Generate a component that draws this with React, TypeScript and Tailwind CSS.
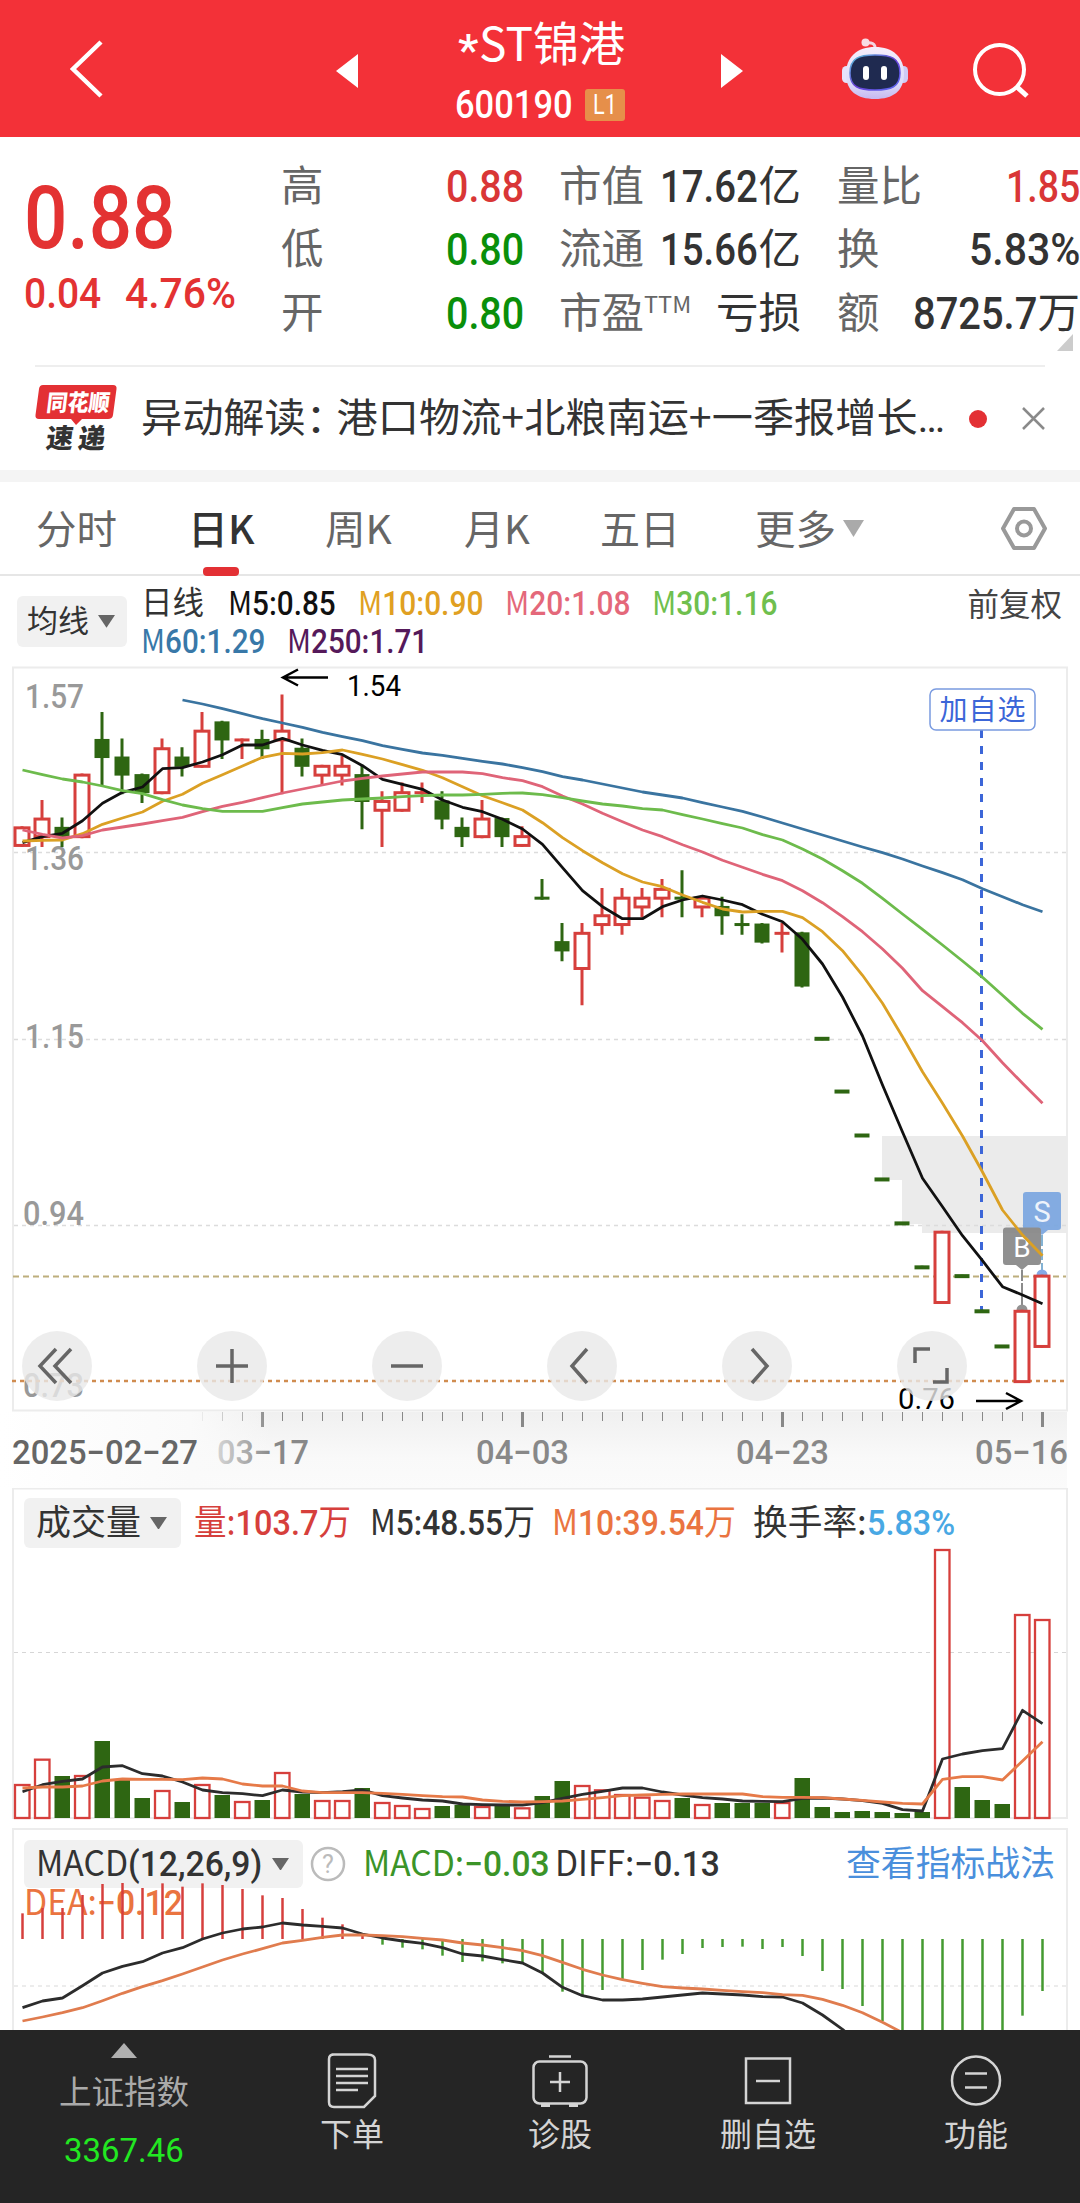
import React, { useLayoutEffect, useRef, useState } from 'react';

type Candle = [up: boolean, high: number, top: number, bottom: number, low: number];

const RED = '#d63f3c';
const GREEN = '#2e6612';

// [rising, high, body top, body bottom, low]
const candles: Candle[] = [
  [true, 1.39, 1.39, 1.37, 1.37], [true, 1.42, 1.4, 1.38, 1.37], [false, 1.4, 1.39, 1.38, 1.37],
  [true, 1.45, 1.45, 1.38, 1.38], [false, 1.52, 1.49, 1.47, 1.44], [false, 1.49, 1.47, 1.45, 1.43],
  [false, 1.45, 1.45, 1.43, 1.42], [true, 1.49, 1.48, 1.43, 1.43], [false, 1.48, 1.47, 1.46, 1.45],
  [true, 1.52, 1.5, 1.46, 1.46], [false, 1.51, 1.51, 1.49, 1.47], [true, 1.49, 1.49, 1.49, 1.47],
  [false, 1.5, 1.49, 1.48, 1.47], [true, 1.54, 1.5, 1.49, 1.43], [false, 1.49, 1.48, 1.46, 1.45],
  [true, 1.46, 1.46, 1.45, 1.44], [true, 1.47, 1.46, 1.45, 1.44], [false, 1.46, 1.45, 1.42, 1.39],
  [true, 1.43, 1.42, 1.41, 1.37], [true, 1.44, 1.43, 1.41, 1.41], [true, 1.44, 1.43, 1.43, 1.42],
  [false, 1.43, 1.42, 1.4, 1.39], [false, 1.4, 1.39, 1.38, 1.37], [true, 1.42, 1.4, 1.38, 1.38],
  [false, 1.4, 1.4, 1.38, 1.37], [true, 1.39, 1.38, 1.37, 1.37], [false, 1.33, 1.31, 1.31, 1.31],
  [false, 1.28, 1.26, 1.25, 1.24], [true, 1.28, 1.27, 1.23, 1.19], [true, 1.32, 1.29, 1.28, 1.27],
  [true, 1.32, 1.31, 1.28, 1.27], [true, 1.32, 1.31, 1.3, 1.29], [true, 1.33, 1.32, 1.31, 1.29],
  [false, 1.34, 1.31, 1.31, 1.29], [true, 1.31, 1.31, 1.3, 1.29], [false, 1.31, 1.3, 1.29, 1.27],
  [false, 1.29, 1.28, 1.28, 1.27], [false, 1.28, 1.28, 1.26, 1.26], [true, 1.28, 1.27, 1.27, 1.25],
  [false, 1.27, 1.27, 1.21, 1.21], [false, 1.15, 1.15, 1.15, 1.15], [false, 1.09, 1.09, 1.09, 1.09],
  [false, 1.04, 1.04, 1.04, 1.04], [false, 0.99, 0.99, 0.99, 0.99], [false, 0.94, 0.94, 0.94, 0.94],
  [false, 0.89, 0.89, 0.89, 0.89], [true, 0.93, 0.93, 0.85, 0.85], [false, 0.88, 0.88, 0.88, 0.88],
  [false, 0.84, 0.84, 0.84, 0.84], [false, 0.8, 0.8, 0.8, 0.8], [true, 0.84, 0.84, 0.76, 0.76],
  [true, 0.88, 0.88, 0.8, 0.8],
];

// Moving averages, in thirds of a pixel below y = 650
const ma5 = [578, 560, 550, 512, 460, 427, 411, 356, 353, 336, 314, 285, 285, 265, 285, 301, 314, 347, 388, 403, 418, 450, 472, 485, 508, 537, 583, 653, 722, 770, 806, 806, 770, 750, 738, 750, 764, 793, 815, 868, 942, 1041, 1158, 1305, 1446, 1585, 1670, 1757, 1832, 1910, 1935, 1961];
const ma10 = [573, 571, 570, 551, 523, 504, 486, 454, 433, 400, 374, 348, 322, 310, 312, 308, 300, 313, 327, 344, 361, 383, 410, 437, 458, 480, 518, 563, 602, 638, 671, 696, 710, 735, 757, 777, 786, 784, 784, 803, 845, 902, 976, 1060, 1160, 1265, 1360, 1458, 1566, 1680, 1755, 1817];
const ma20 = [540, 553, 564, 557, 540, 531, 522, 512, 502, 485, 469, 457, 443, 429, 417, 405, 393, 385, 378, 372, 366, 366, 366, 371, 383, 392, 410, 438, 462, 490, 515, 540, 560, 584, 606, 631, 652, 673, 692, 722, 758, 800, 845, 897, 955, 1022, 1070, 1118, 1172, 1238, 1300, 1360];
const ma30 = [360, 374, 387, 396, 408, 422, 431, 449, 465, 476, 484, 484, 484, 473, 462, 456, 450, 447, 444, 440, 437, 435, 435, 433, 430, 429, 434, 443, 453, 462, 468, 476, 480, 494, 507, 521, 534, 554, 570, 597, 627, 662, 700, 745, 792, 838, 885, 933, 982, 1036, 1090, 1138];
const ma60 = [150, 162, 176, 191, 206, 219, 232, 247, 260, 272, 287, 298, 309, 316, 325, 334, 342, 353, 365, 380, 390, 402, 414, 426, 435, 444, 458, 471, 484, 501, 519, 537, 555, 573, 591, 608, 627, 648, 668, 689, 716, 740, 764, 785];

const volTop = [912, 836, 888, 885, 783, 900, 954, 930, 966, 912, 945, 963, 960, 876, 942, 960, 960, 924, 966, 975, 984, 978, 975, 978, 978, 982, 948, 903, 915, 928, 942, 950, 960, 954, 972, 969, 969, 969, 966, 894, 981, 996, 993, 996, 999, 996, 207, 921, 960, 972, 402, 417];
const vol5 = [935, 914, 904, 897, 861, 857, 881, 888, 906, 930, 938, 941, 947, 930, 936, 938, 935, 930, 947, 954, 960, 963, 972, 974, 975, 975, 968, 955, 943, 934, 924, 924, 936, 945, 953, 957, 963, 964, 965, 955, 954, 957, 962, 970, 989, 993, 837, 822, 812, 806, 691, 731];
const vol10 = [924, 921, 921, 918, 903, 897, 898, 898, 899, 894, 897, 912, 918, 918, 933, 938, 938, 938, 940, 943, 947, 950, 951, 960, 964, 966, 965, 963, 958, 953, 947, 945, 943, 942, 942, 942, 942, 950, 952, 952, 953, 957, 961, 966, 970, 972, 898, 890, 890, 900, 843, 785];

const macd = [280, 264, 264, 225, 192, 189, 204, 190, 200, 190, 195, 207, 226, 234, 267, 293, 313, 343, 374, 383, 388, 407, 426, 424, 430, 428, 462, 515, 527, 510, 480, 450, 419, 402, 384, 381, 380, 387, 381, 408, 453, 507, 558, 603, 700, 700, 700, 700, 700, 700, 587, 513];
const diff = [563, 543, 534, 497, 459, 439, 425, 399, 383, 357, 339, 327, 321, 309, 315, 319, 324, 342, 354, 363, 370, 383, 402, 408, 419, 429, 459, 502, 527, 540, 540, 537, 531, 525, 519, 522, 525, 530, 531, 549, 585, 628, 680];
const dea = [603, 591, 578, 563, 542, 520, 500, 482, 462, 441, 420, 402, 386, 369, 361, 352, 345, 345, 347, 350, 355, 360, 369, 375, 383, 392, 407, 427, 448, 465, 479, 490, 500, 504, 507, 511, 515, 518, 524, 526, 538, 556, 578, 607, 638];

const xAt = (i: number) => 22 + i * 20;
const priceY = (p: number) => 696 + (1.54 - p) * 879;
const points = (ys: number[], base: number, start = 0) =>
  ys.map((y, i) => `${xAt(i + start) + 0.5},${(base + y / 3).toFixed(1)}`).join(' ');

// Squeezes its text to the width of the box, for the condensed numerals
const Fit: React.FC<{ className?: string; children: React.ReactNode }> = ({ className = '', children }) => {
  const boxRef = useRef<HTMLSpanElement>(null);
  const textRef = useRef<HTMLSpanElement>(null);
  const [scale, setScale] = useState(1);

  useLayoutEffect(() => {
    if (boxRef.current && textRef.current) {
      setScale(boxRef.current.clientWidth / textRef.current.offsetWidth);
    }
  }, []);

  return (
    <span ref={boxRef} className={`block shrink-0 whitespace-nowrap ${className}`}>
      <span ref={textRef} className="inline-block origin-left" style={{ transform: `scaleX(${scale})` }}>
        {children}
      </span>
    </span>
  );
};

// Latin letters that take the shape of the Chinese face
const Cn: React.FC<{ children: React.ReactNode }> = ({ children }) => (
  <span className="[font-family:'Noto_Sans_CJK_SC',sans-serif] font-normal leading-[0]">{children}</span>
);

const Caret: React.FC<{ className?: string }> = ({ className = '' }) => (
  <svg viewBox="0 0 16 12" className={className}>
    <path d="M0 0H16L8 12Z" fill="#666" />
  </svg>
);

const Header = () => (
  <header className="flex h-[137px] shrink-0 items-center bg-[#f33138] text-white">
    <svg width="33" height="58" viewBox="0 0 33 58" className="ml-[70px]" fill="none" stroke="#fff" strokeWidth="4.5">
      <path d="M31 2L3 29L31 56" />
    </svg>
    <svg width="22" height="34" viewBox="0 0 22 34" className="ml-[233px] mt-1">
      <path d="M22 0V34L0 17Z" fill="#fff" />
    </svg>
    <div className="ml-[97px] mt-0.5 flex w-[170px] flex-col gap-[10px]">
      <div className="flex h-[60px] items-center pl-[3px]">
        <Fit className="mt-3 w-[21px] text-[44px] font-medium leading-[60px]">*</Fit>
        <Fit className="w-[146px] text-[47px] leading-[60px]"><Cn>ST锦港</Cn></Fit>
      </div>
      <div className="flex h-10 items-center">
        <Fit className="w-[118px] text-[38px] font-medium leading-10">600190</Fit>
        <span className="ml-3 flex h-8 w-10 items-center justify-center rounded-[3px] bg-[#e68f4a]">
          <Fit className="w-[24px] text-[27px] leading-8">L1</Fit>
        </span>
      </div>
    </div>
    <svg width="22" height="34" viewBox="0 0 22 34" className="ml-24 mt-1">
      <path d="M0 0V34L22 17Z" fill="#fff" />
    </svg>
    <svg width="68" height="62" viewBox="0 0 68 62" className="ml-[98px]">
      <defs>
        <linearGradient id="shell" x1="0" y1="0" x2="0" y2="1">
          <stop offset="0" stopColor="#f6edfb" />
          <stop offset="0.7" stopColor="#dcdcfa" />
          <stop offset="1" stopColor="#c6b8f0" />
        </linearGradient>
        <linearGradient id="rim" x1="0" y1="0" x2="1" y2="1">
          <stop offset="0" stopColor="#59c8d8" />
          <stop offset="0.5" stopColor="#6a3fd8" />
          <stop offset="1" stopColor="#5a6cf0" />
        </linearGradient>
      </defs>
      <path d="M34 12C35 5 30 4 24 5" fill="none" stroke="#f3d5e2" strokeWidth="3" />
      <circle cx="24.500" cy="4.500" r="4" fill="#f8dbe3" />
      <rect x="1" y="28" width="9" height="17" rx="4.500" fill="#e6e2fb" />
      <rect x="58" y="28" width="9" height="17" rx="4.500" fill="#cfcbf6" />
      <path d="M34 9C52 9 63 19 63 36C63 53 52 61 34 61C16 61 5 53 5 36C5 19 16 9 34 9Z" fill="url(#shell)" />
      <path d="M34 17C50 17 59 20 59 35C59 49 50 52 34 52C18 52 9 49 9 35C9 20 18 17 34 17Z" fill="#1f2a50" stroke="url(#rim)" strokeWidth="1.500" />
      <rect x="22" y="28" width="6" height="14" rx="3" fill="#fff" />
      <rect x="40" y="28" width="6" height="14" rx="3" fill="#fff" />
    </svg>
    <svg width="56" height="56" viewBox="0 0 56 56" className="ml-16 mt-1" fill="none" stroke="#fff" strokeWidth="4">
      <circle cx="26.500" cy="26.500" r="24.500" />
      <path d="M43 43L54 53" strokeWidth="5" />
    </svg>
  </header>
);

const QuoteRow: React.FC<{ label: React.ReactNode; children: React.ReactNode }> = ({ label, children }) => (
  <div className="flex h-[63.5px] items-center justify-between text-[42.5px] leading-[60px]">
    <span className="flex text-[#666]">{label}</span>
    {children}
  </div>
);

const Quote = () => (
  <section className="relative flex h-[228px] shrink-0 pt-[18px] text-[45px] text-[#333]">
    <div className="w-[281px] shrink-0 pt-[13px] text-[#e33232]">
      <Fit className="ml-6 w-[152px] text-[88px] font-medium leading-[100px]">0.88</Fit>
      <div className="flex gap-6 pl-[24px]">
        <Fit className="w-[77px] text-[43px] font-medium leading-[50px]">0.04</Fit>
        <Fit className="w-[111px] text-[43px] font-medium leading-[50px]">4.76%</Fit>
      </div>
    </div>
    <div className="w-[243px] shrink-0">
      <QuoteRow label="高"><Fit className="w-[78px] text-[45px] font-medium text-[#d93636]">0.88</Fit></QuoteRow>
      <QuoteRow label="低"><Fit className="w-[78px] text-[45px] font-medium text-[#0a8f0a]">0.80</Fit></QuoteRow>
      <QuoteRow label="开"><Fit className="w-[78px] text-[45px] font-medium text-[#0a8f0a]">0.80</Fit></QuoteRow>
    </div>
    <div className="ml-[35px] w-[242px] shrink-0">
      <QuoteRow label="市值">
        <span className="flex"><Fit className="w-[98px] text-[45px] font-medium">17.62</Fit>亿</span>
      </QuoteRow>
      <QuoteRow label="流通">
        <span className="flex"><Fit className="w-[98px] text-[45px] font-medium">15.66</Fit>亿</span>
      </QuoteRow>
      <QuoteRow label={<>市盈<Fit className="mt-[-8px] w-[47px] text-[23px]"><Cn>TTM</Cn></Fit></>}>
        <span>亏损</span>
      </QuoteRow>
    </div>
    <div className="ml-[36px] w-[243px] shrink-0">
      <QuoteRow label="量比"><Fit className="w-[74px] text-[45px] font-medium text-[#d93636]">1.85</Fit></QuoteRow>
      <QuoteRow label="换"><Fit className="w-[111px] text-[45px] font-medium">5.83%</Fit></QuoteRow>
      <QuoteRow label="额">
        <span className="flex"><Fit className="w-[124px] text-[45px] font-medium">8725.7</Fit>万</span>
      </QuoteRow>
    </div>
    <svg width="16" height="17" viewBox="0 0 16 17" className="absolute bottom-[14px] right-[7px]">
      <path d="M16 0V17H0Z" fill="#ccc" />
    </svg>
  </section>
);

const News = () => (
  <section className="mx-[35px] flex h-[105px] shrink-0 items-center border-t-2 border-[#eee]">
    <svg width="84" height="70" viewBox="0 0 84 70" className="shrink-0">
      <path d="M8 1H78Q82 1 81.500 5L78 31Q77.500 35 73 35H47L41 41L36 35H4Q0 35 0.500 31L4 5Q4.500 1 8 1Z" fill="#e33034" />
      <g transform="skewX(-7)" fontFamily="'Noto Sans CJK SC', sans-serif" fontWeight="900">
        <text x="14" y="27" fontSize="23" fill="#fff" textLength="63" lengthAdjust="spacingAndGlyphs">同花顺</text>
        <text x="18" y="64" fontSize="27" fill="#333" textLength="27" lengthAdjust="spacingAndGlyphs">速</text>
        <text x="50" y="64" fontSize="27" fill="#333" textLength="27" lengthAdjust="spacingAndGlyphs">递</text>
      </g>
    </svg>
    <Fit className="ml-[22px] w-[804px] text-[40px] leading-[60px] text-[#333]">
      <Cn>异动解读<span className="tracking-[-10px]">：</span>港口物流+北粮南运+一季报增长</Cn>…
    </Fit>
    <span className="ml-[24px] size-[18px] rounded-full bg-[#e33034]" />
    <svg width="23" height="23" viewBox="0 0 23 23" className="ml-auto" stroke="#8a8a8a" strokeWidth="2.500">
      <path d="M1 1L22 22M22 1L1 22" />
    </svg>
  </section>
);

const Tabs = () => (
  <nav className="flex h-[94px] shrink-0 items-center border-b-2 border-[#e6e6e6] pl-9 pt-[5px] text-[40px] leading-[60px] text-[#666]">
    <Fit className="w-[81px]">分时</Fit>
    <span className="relative ml-[71px]">
      <Fit className="w-[67px] font-medium text-[#333]"><Cn><b className="font-medium">日K</b></Cn></Fit>
      <span className="absolute bottom-[-15px] left-[15px] h-[9px] w-9 rounded-[4px] bg-[#e33034]" />
    </span>
    <Fit className="ml-[70px] w-[67px]"><Cn>周K</Cn></Fit>
    <Fit className="ml-[72px] w-[66px]"><Cn>月K</Cn></Fit>
    <Fit className="ml-[70px] w-[80px]">五日</Fit>
    <Fit className="ml-[75px] w-[81px]">更多</Fit>
    <svg width="21" height="17" viewBox="0 0 21 17" className="ml-[7px] mt-[-4px]">
      <path d="M0 0H21L10.500 17Z" fill="#aaa" />
    </svg>
    <svg width="46" height="43" viewBox="0 0 46 43" className="ml-[137px] mt-[-5px]" fill="none" stroke="#999" strokeWidth="4" strokeLinejoin="round">
      <path d="M13 2H33L44 21.500L33 41H13L2 21.500Z" />
      <circle cx="23" cy="21.500" r="7" />
    </svg>
  </nav>
);

const Averages = () => (
  <section className="flex h-[84px] shrink-0 pl-[17px] text-[33px] leading-[38px]">
    <div className="mt-[20px] flex h-[51px] w-[110px] items-center rounded-[6px] bg-[#f1f1f1] pl-[10px]">
      <span className="text-[31px] text-[#333]">均线</span>
      <Caret className="ml-[9px] w-[17px]" />
    </div>
    <div className="ml-[14px] mt-[9px]">
      <div className="flex">
        <span className="text-[31.5px] text-[#333]">日线</span>
        <Fit className="ml-[24px] w-[108px] font-medium text-[#111]"><Cn>M</Cn>5:0.85</Fit>
        <Fit className="ml-[22px] w-[125px] font-medium text-[#e0a022]"><Cn>M</Cn>10:0.90</Fit>
        <Fit className="ml-[22px] w-[125px] font-medium text-[#e4687a]"><Cn>M</Cn>20:1.08</Fit>
        <Fit className="ml-[22px] w-[125px] font-medium text-[#6fbf4e]"><Cn>M</Cn>30:1.16</Fit>
      </div>
      <div className="flex">
        <Fit className="w-[124px] font-medium text-[#3878a8]"><Cn>M</Cn>60:1.29</Fit>
        <Fit className="ml-[22px] w-[141px] font-medium text-[#55195a]"><Cn>M</Cn>250:1.71</Fit>
      </div>
    </div>
    <span className="ml-auto mr-[18px] mt-[11px] text-[31.5px] text-[#444]">前复权</span>
  </section>
);

const tools = ['M-1-17L-17 0L-1 17M14-17L-2 0L14 17', 'M-16 0H16M0-17V17', 'M-16 0H16', 'M5-17L-10 0L5 17', 'M-5-17L10 0L-5 17', 'M-17-3V-17H-2M15 2V16H1'];

const AxisText: React.FC<{ x: number; y: number; w: number; fill?: string; children: string }> = ({ x, y, w, fill = '#999', children }) => (
  <text x={x} y={y} textLength={w} lengthAdjust="spacingAndGlyphs" fontSize="33" fontWeight="500" fill={fill}>
    {children}
  </text>
);

const PriceChart = () => (
  <section className="relative h-[828px] shrink-0">
    <svg width="1080" height="828" viewBox="0 660 1080 828" fill="none">
      <defs>
        <linearGradient id="axisBg" x1="0" y1="0" x2="0" y2="1">
          <stop offset="0" stopColor="#f0f0f0" />
          <stop offset="0.6" stopColor="#f9f9f9" />
          <stop offset="1" stopColor="#fbfbfb" />
        </linearGradient>
        <linearGradient id="axisFade" x1="0" y1="0" x2="1" y2="0">
          <stop offset="0" stopColor="#fff" />
          <stop offset="0.7" stopColor="#fafafa" />
          <stop offset="1" stopColor="#fafafa" stopOpacity="0" />
        </linearGradient>
      </defs>
      <path d="M13 667.500H1067V1410.500H13Z" stroke="#ececec" strokeWidth="2" />
      <path d="M882 1136H1067V1233H922V1224H902V1180H882Z" fill="#ebebeb" />
      <path d="M14 852.500H1066M14 1039.500H1066M14 1225.500H1066" stroke="#dcdcdc" strokeWidth="1.500" strokeDasharray="4 4" />
      <AxisText x={25} y={708} w={59}>1.57</AxisText>
      <AxisText x={25} y={870} w={59}>1.36</AxisText>
      <AxisText x={25} y={1048} w={59}>1.15</AxisText>
      <AxisText x={23} y={1225} w={61}>0.94</AxisText>
      <AxisText x={23} y={1397} w={61}>0.73</AxisText>
      <path d="M13 1276.500H1066" stroke="#bdae7c" strokeWidth="2" strokeDasharray="6 4" />
      <path d="M12 1381H1066" stroke="#d08c50" strokeWidth="2.500" strokeDasharray="4 4" />

      <path d="M981.500 730V1312" stroke="#3c66d8" strokeWidth="3" strokeDasharray="8 8" />
      <rect x="930" y="689" width="105" height="41" rx="6" fill="#fff" stroke="#7a9be0" strokeWidth="1.500" />
      <text x="939.500" y="720" fontSize="28" fill="#3c66d8" textLength="86">加自选</text>

      <g opacity="0.9">
        <path d="M1026 1192H1058Q1061 1192 1061 1195V1227Q1061 1230 1058 1230H1048L1042 1235L1036 1230H1026Q1023 1230 1023 1227V1195Q1023 1192 1026 1192Z" fill="#78a5e0" />
        <path d="M1042 1235V1272" stroke="#4a8fc0" strokeWidth="1.500" strokeDasharray="11 3" />
        <circle cx="1042" cy="1275" r="5.500" fill="#78a0e4" />
        <text x="1042" y="1222" textAnchor="middle" fontSize="29" fill="#eef4fd">S</text>
        <path d="M1006 1227.500H1038Q1041 1227.500 1041 1230.500V1262Q1041 1265 1038 1265H1028L1022 1270L1016 1265H1006Q1003 1265 1003 1262V1230.500Q1003 1227.500 1006 1227.500Z" fill="#858585" />
        <path d="M1022 1270V1306" stroke="#555" strokeWidth="1.500" strokeDasharray="11 2" />
        <circle cx="1022" cy="1310" r="5.500" fill="#888" />
        <text x="1022" y="1257" textAnchor="middle" fontSize="28" fill="#fff">B</text>
      </g>

      {candles.map(([up, high, top, bottom, low], i) => {
        const x = xAt(i);
        const yTop = priceY(top);
        const yBottom = priceY(bottom);
        const color = up ? RED : GREEN;
        return (
          <g key={i} stroke={color} strokeWidth="3">
            <path d={`M${x} ${priceY(high) - 1.5}V${yTop}M${x} ${yBottom}V${priceY(low) + 1.5}`} />
            {top === bottom ? (
              <path d={`M${x - 7.5} ${yTop}H${x + 7.5}`} strokeWidth={high === low ? 4 : 3} />
            ) : up ? (
              <rect x={x - 7} y={yTop} width="14" height={yBottom - yTop} fill="#fff" />
            ) : (
              <rect x={x - 7.5} y={yTop - 1} width="15" height={yBottom - yTop + 1.5} fill={GREEN} stroke="none" />
            )}
          </g>
        );
      })}

      <g strokeWidth="2.800" strokeLinejoin="round">
        <polyline points={points(ma60, 650, 8)} stroke="#3a74a0" />
        <polyline points={points(ma5, 650)} stroke="#111" />
        <polyline points={points(ma10, 650)} stroke="#dba024" />
        <polyline points={points(ma20, 650)} stroke="#df6478" />
        <polyline points={points(ma30, 650)} stroke="#6dbb4c" />
      </g>

      <path d="M328 677.500H283M298 669.500L283 677.500L298 685.500" stroke="#000" strokeWidth="2.500" />
      <text x="347" y="696" fontSize="29" fill="#000" textLength="54" lengthAdjust="spacingAndGlyphs">1.54</text>
      <path d="M976 1401H1021M1006 1393L1021 1401L1006 1409" stroke="#000" strokeWidth="2.500" />
      <text x="898" y="1409" fontSize="29" fill="#000" textLength="57" lengthAdjust="spacingAndGlyphs">0.76</text>

      <rect x="12" y="1412" width="1055" height="76" fill="url(#axisBg)" />
      {candles.map((_, i) => (
        <path key={i} d={i % 13 === 12 ? `M${xAt(i) + 0.5} 1412V1427` : `M${xAt(i) + 0.5} 1412V1421`} stroke="#888" strokeWidth={i % 13 === 12 ? 3 : 1} />
      ))}
      <AxisText x={217} y={1464} w={92} fill="#888">03−17</AxisText>
      <AxisText x={476} y={1464} w={93} fill="#888">04−03</AxisText>
      <AxisText x={736} y={1464} w={93} fill="#888">04−23</AxisText>
      <AxisText x={975} y={1464} w={93} fill="#888">05−16</AxisText>
      <rect x="0" y="1412" width="272" height="76" fill="url(#axisFade)" />
      <AxisText x={12} y={1464} w={186} fill="#666">2025−02−27</AxisText>
    </svg>
    <div className="absolute left-[22px] top-[671px] flex gap-[105px]">
      {tools.map((d) => (
        <svg key={d} width="70" height="70" viewBox="-35 -35 70 70" className="rounded-full bg-[#e9e9e9]/80" fill="none" stroke="#666" strokeWidth="3.500">
          <path d={d} />
        </svg>
      ))}
    </div>
  </section>
);

const Volume = () => (
  <section className="relative h-[340px] shrink-0">
    <svg width="1080" height="340" viewBox="0 1488 1080 340" className="absolute inset-0" fill="none">
      <path d="M13 1818V1488.500H1067V1818Z" stroke="#ececec" strokeWidth="2" />
      <path d="M14 1652.500H1066" stroke="#d6d6d6" strokeWidth="1.200" strokeDasharray="4 4" />
      {volTop.map((top, i) => {
        const y = 1480 + top / 3;
        return candles[i][0] ? (
          <rect key={i} x={xAt(i) - 7} y={y + 1} width="14.500" height={1817 - y} fill="#fff" stroke={RED} strokeWidth="2.300" />
        ) : (
          <rect key={i} x={xAt(i) - 7.5} y={y} width="15.500" height={1818 - y} fill={GREEN} />
        );
      })}
      <g strokeWidth="2.800" strokeLinejoin="round">
        <polyline points={points(vol5, 1480)} stroke="#2c2c2c" />
        <polyline points={points(vol10, 1480)} stroke="#e67a48" />
      </g>
    </svg>
    <div className="relative flex items-center pl-6 pt-[10px] text-[35px] leading-[47px] text-[#333]">
      <div className="flex h-[50px] w-[157px] items-center rounded-[6px] bg-[#f1f1f1] pl-[12px]">
        <span>成交量</span>
        <Caret className="ml-[9px] w-[17px]" />
      </div>
      <Fit className="ml-[13px] w-[157px] font-medium text-[#d63f3c]"><Cn>量:</Cn>103.7<Cn>万</Cn></Fit>
      <Fit className="ml-[19px] w-[165px] font-medium"><Cn>M</Cn>5:48.55<Cn>万</Cn></Fit>
      <Fit className="ml-[17px] w-[184px] font-medium text-[#ea7440]"><Cn>M</Cn>10:39.54<Cn>万</Cn></Fit>
      <Fit className="ml-[17px] w-[114px]"><Cn>换手率:</Cn></Fit>
      <Fit className="w-[88px] font-medium text-[#48a8e4]">5.83%</Fit>
    </div>
  </section>
);

const Macd = () => (
  <section className="relative h-[202px] shrink-0 overflow-hidden">
    <svg width="1080" height="202" viewBox="0 1828 1080 202" className="absolute inset-0" fill="none">
      <path d="M13 2040V1829H1067V2040" stroke="#ececec" strokeWidth="2" />
      <path d="M14 1986H1066" stroke="#e6e6e6" strokeWidth="1.500" strokeDasharray="4 4" />
    </svg>
    <div className="relative flex items-center pl-6 pt-[12px] text-[35px] leading-[47px] text-[#333]">
      <div className="flex h-[48px] w-[279px] items-center rounded-[6px] bg-[#f1f1f1] pl-[12px]">
        <Fit className="w-[226px] font-medium"><Cn>MACD</Cn>(12,26,9)</Fit>
        <Caret className="ml-[10px] w-[17px]" />
      </div>
      <svg width="36" height="36" viewBox="0 0 36 36" className="ml-[7px]">
        <circle cx="18" cy="18" r="16" fill="none" stroke="#bbb" strokeWidth="2.500" />
        <text x="18" y="27" textAnchor="middle" fontSize="25" fill="#bbb">?</text>
      </svg>
      <Fit className="ml-[17px] w-[187px] font-medium text-[#3b9428]"><Cn>MACD:</Cn>−0.03</Fit>
      <Fit className="ml-[5px] w-[165px] font-medium"><Cn>DIFF:</Cn>−0.13</Fit>
      <Fit className="ml-auto mr-[25px] w-[209px] text-[#4a8fdc]">查看指标战法</Fit>
    </div>
    <div className="relative pl-[24px]">
      <Fit className="mt-[-8px] w-[159px] text-[35px] font-medium leading-[47px] text-[#ea7440]"><Cn>DEA:</Cn>−0.12</Fit>
    </div>
    <svg width="1080" height="202" viewBox="0 1828 1080 202" className="absolute inset-0" fill="none">
      {macd.map((v, i) => (
        <path key={i} d={`M${xAt(i) + 0.5} 1939V${1820 + v / 3}`} stroke={i < 18 ? RED : '#449a30'} strokeWidth="2.500" />
      ))}
      <g strokeWidth="2.800" strokeLinejoin="round">
        <polyline points={points(diff, 1820)} stroke="#2c2c2c" />
        <polyline points={points(dea, 1820)} stroke="#e07c4e" />
      </g>
    </svg>
  </section>
);

const FooterItem: React.FC<{ label: string; children: React.ReactNode }> = ({ label, children }) => (
  <div className="flex w-[208px] flex-col items-center pt-[23px]">
    <svg width="56" height="56" viewBox="0 0 56 56" fill="none" stroke="#d4d4d4" strokeWidth="2.500">
      {children}
    </svg>
    <span className="mt-[1px] text-[32px] leading-[50px]">{label}</span>
  </div>
);

const Footer = () => (
  <footer className="flex h-[173px] shrink-0 bg-[#252525] text-[#d4d4d4]">
    <div className="flex w-[248px] flex-col items-center pt-[13px]">
      <svg width="26" height="15" viewBox="0 0 26 15">
        <path d="M13 0L26 15H0Z" fill="#b0b0b0" />
      </svg>
      <span className="mt-[10px] text-[32.5px] leading-[50px] text-[#aaa]">上证指数</span>
      <Fit className="mt-[7px] w-[120px] text-[34px] leading-[50px] text-[#22e822]">3367.46</Fit>
    </div>
    <FooterItem label="下单">
      <path d="M8 1.500H43Q51 1.500 51 7V43L40 54H10Q5 54 5 49V6Q5 1.500 10 1.500M12 16H44M12 23H44M12 30H44M12 37H34" />
    </FooterItem>
    <FooterItem label="诊股">
      <rect x="1.500" y="8.500" width="53" height="42" rx="6" />
      <path d="M17 3.500H39M28 19V39M18 29H38" />
      <path d="M9 52H18M37 52H46" strokeWidth="4" />
    </FooterItem>
    <FooterItem label="删自选">
      <path d="M6 5.500H50V50H6ZM16 28H40" />
    </FooterItem>
    <FooterItem label="功能">
      <circle cx="28" cy="27.500" r="24" />
      <path d="M17 20.500H39M17 34.500H39" />
    </FooterItem>
  </footer>
);

export default function App() {
  return (
    <main className="flex h-[2203px] w-[1080px] flex-col overflow-hidden bg-white [font-family:Roboto,'Noto_Sans_CJK_SC',sans-serif]">
      <Header />
      <Quote />
      <News />
      <div className="h-3 shrink-0 bg-[#f4f4f4]" />
      <Tabs />
      <Averages />
      <PriceChart />
      <Volume />
      <Macd />
      <Footer />
    </main>
  );
}
